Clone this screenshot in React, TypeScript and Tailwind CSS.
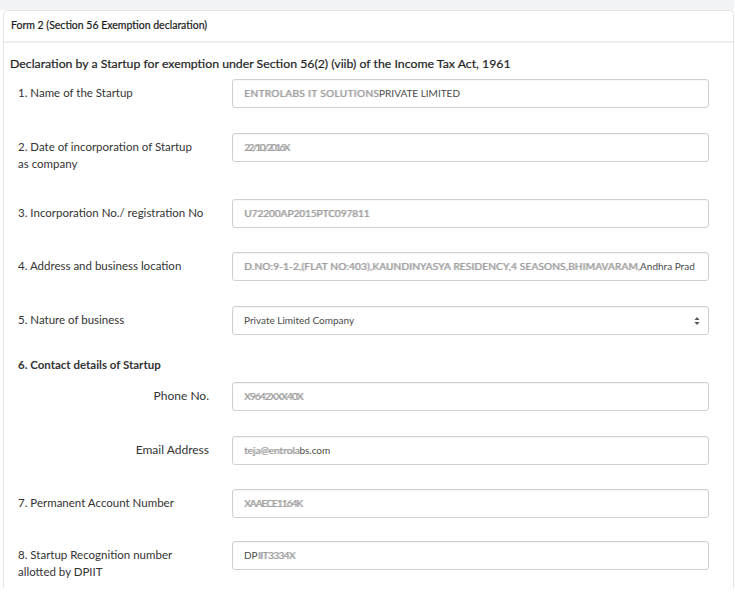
import React from 'react';

type Part = { t: string; r?: boolean; tr?: string };

function Val({ parts }: { parts: Part[] }) {
  return (
    <span className="whitespace-nowrap">
      {parts.map((p, i) =>
        p.r ? (
          <span key={i} className={`text-[#9a9a9a] [text-shadow:1px_0_0_#c4c4c4] ${p.tr || ''}`}>
            {p.t}
          </span>
        ) : (
          <span key={i} className="text-[#4a4a4a]">
            {p.t}
          </span>
        )
      )}
    </span>
  );
}

function Row({
  label,
  parts,
  mb,
  right,
  select,
}: {
  label: React.ReactNode;
  parts: Part[];
  mb: string;
  right?: boolean;
  select?: boolean;
}) {
  return (
    <div className={`flex items-start ${mb}`}>
      <div
        className={
          right
            ? 'w-[214px] pr-[23px] pt-[5px] text-right text-[12px] leading-[17px] text-[#333]'
            : 'w-[214px] pr-[10px] pt-[5px] text-[11.5px] leading-[17px] text-[#333]'
        }
      >
        {label}
      </div>
      <div className="w-[477px] h-[29px] border border-[#cfcfcf] rounded-[3px] bg-white flex items-center pl-[11px] pr-[8px] text-[10px] overflow-hidden shadow-[inset_0_1px_1px_rgba(0,0,0,0.04)]">
        <div className="flex-1 overflow-hidden">
          <Val parts={parts} />
        </div>
        {select && (
          <svg width="6" height="10" viewBox="0 0 6 10" className="shrink-0">
            <path d="M0.5 4 L3 1 L5.5 4 Z" fill="#555" />
            <path d="M0.5 6 L3 9 L5.5 6 Z" fill="#555" />
          </svg>
        )}
      </div>
    </div>
  );
}

export default function App() {
  return (
    <div className="w-[735px] h-[609px] overflow-hidden bg-white font-['Lato','Open_Sans',sans-serif]">
      <div className="h-[10px] w-[734px] bg-[#f2f3f5]" />
      <div className="ml-[3px] w-[731px] border border-b-0 border-[#e4e4e4] rounded-t-[5px]">
        <div className="h-[32px] flex items-center px-[7px] text-[10.5px] text-[#1a1a1a] [-webkit-text-stroke:0.2px_#1a1a1a] border-b-2 border-[#eeeeee]">
          Form 2 (Section 56 Exemption declaration)
        </div>
        <div className="px-[6px] pt-[13px] pb-[8px]">
          <div className="text-[12.3px] leading-[16px] text-[#1e1e1e] [-webkit-text-stroke:0.2px_#1e1e1e] mb-[7px]">
            Declaration by a Startup for exemption under Section 56(2) (viib) of the Income Tax Act, 1961
          </div>
          <div className="pl-[8px]">
            <Row
              label="1. Name of the Startup"
              parts={[{ t: 'ENTROLABS IT SOLUTIONS', r: true, tr: 'tracking-[0.4px]' }, { t: 'PRIVATE LIMITED' }]}
              mb="mb-[25px]"
            />
            <Row
              label={
                <>
                  2. Date of incorporation of Startup
                  <br />
                  as company
                </>
              }
              parts={[{ t: '22/10/2016X', r: true, tr: 'tracking-[-1.6px]' }]}
              mb="mb-[27px]"
            />
            <Row
              label="3. Incorporation No./ registration No"
              parts={[{ t: 'U72200AP2015PTC097811', r: true, tr: 'tracking-[0px]' }]}
              mb="mb-[24px]"
            />
            <Row
              label="4. Address and business location"
              parts={[
                {
                  t: 'D.NO:9-1-2,(FLAT NO:403),KAUNDINYASYA RESIDENCY,4 SEASONS,BHIMAVARAM,',
                  r: true,
                  tr: 'tracking-[0.2px]',
                },
                { t: 'Andhra Prad' },
              ]}
              mb="mb-[25px]"
            />
            <Row
              label="5. Nature of business"
              parts={[{ t: 'Private Limited Company' }]}
              mb="mb-[21px]"
              select
            />
            <div className="text-[11.5px] leading-[17px] font-bold text-[#333] mb-[9px]">
              6. Contact details of Startup
            </div>
            <Row
              label="Phone No."
              parts={[{ t: 'X9642XXX40X', r: true, tr: 'tracking-[-0.8px]' }]}
              mb="mb-[25px]"
              right
            />
            <Row
              label="Email Address"
              parts={[{ t: 'teja@entrola', r: true, tr: 'tracking-[0px]' }, { t: 'bs.com' }]}
              mb="mb-[24px]"
              right
            />
            <Row
              label="7. Permanent Account Number"
              parts={[{ t: 'XAAECE1164K', r: true, tr: 'tracking-[-0.9px]' }]}
              mb="mb-[23px]"
            />
            <Row
              label={
                <>
                  8. Startup Recognition number
                  <br />
                  allotted by DPIIT
                </>
              }
              parts={[{ t: 'DP' }, { t: 'IIT3334X', r: true, tr: 'tracking-[-0.5px]' }]}
              mb="mb-0"
            />
          </div>
        </div>
      </div>
    </div>
  );
}
